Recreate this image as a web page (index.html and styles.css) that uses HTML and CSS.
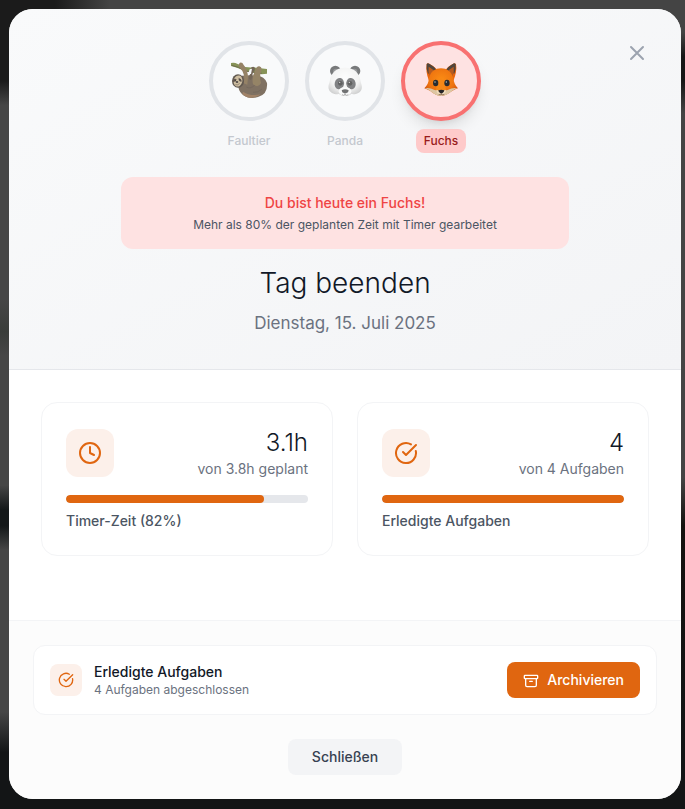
FILE: index.html
```html
<!DOCTYPE html>
<html lang="de">
<head>
<meta charset="utf-8">
<meta name="viewport" content="width=device-width, initial-scale=1">
<title>Tag beenden</title>
<link rel="stylesheet" href="styles.css">
</head>
<body>
<main class="modal" role="dialog" aria-labelledby="title">
  <header class="header">
    <button class="close" type="button" aria-label="Dialog beenden">
      <svg width="24" height="24" viewBox="0 0 24 24" fill="none" stroke="currentColor" stroke-width="2" stroke-linecap="round" stroke-linejoin="round"><path d="M6 18 18 6M6 6l12 12"/></svg>
    </button>
    <div class="animals">
      <div class="animal">
        <div class="ring">
          <svg class="sloth" width="40" height="40" viewBox="0 0 120 120">
            <path d="M6 6q10-3 20 3l22 9q14 2 26 1l40 5v14l-16 2q-28-6-48-9L24 20 6 15z" fill="#6b7a30"/>
            <path d="M8 13l20 6 26 12 44 6" fill="none" stroke="#4d4a24" stroke-width="3"/>
            <path d="M25 58q5-16 26-14l13-2 18 2q25 1 32 22 3 34-27 42-23 8-42-4-14-9-17-26z" fill="#614f3d"/>
            <path d="M42 92q22 15 53 8-11 10-29 11-17-2-26-12z" fill="#8b6543"/>
            <path d="M44 67Q51 39 31 18q-5-8 2-13 7-2 11 7 12 13 13 37l-2 22z" fill="#7d6542"/>
            <path d="M72 70q-5-21 7-42 4-13 12-12 9 2 6 13-7 18-1 37-8 17-24 4z" fill="#7d6742"/>
            <path d="M66 20q9-7 12 2 0 8-6 12l-5 22q-5 2-7-4l5-22z" fill="#52422e"/>
            <path d="M57 40l5-15 7-2-3 16z" fill="#f7f8fa"/>
            <ellipse cx="27" cy="60" rx="18" ry="20" fill="#3b3025"/>
            <ellipse cx="27" cy="60" rx="13" ry="17" fill="#c4b08b" transform="rotate(15 27 60)"/>
            <path d="M11 57q7-6 12-2-2 8-10 9zM29 50q8 3 10 11-6 3-10-4z" fill="#3e2f25"/>
            <circle cx="19" cy="59" r="2" fill="#191614"/><circle cx="33" cy="56" r="2" fill="#191614"/>
            <ellipse cx="24" cy="63" rx="4" ry="3" fill="#28211d"/>
            <path d="M19 71q8 3 13-4" fill="none" stroke="#5c4939" stroke-width="2"/>
            <path d="M52 78q11 7 25-5M72 94q15 2 27-10" fill="none" stroke="#4a3b2e" stroke-width="3" opacity=".5"/>
          </svg>
        </div>
        <span class="name">Faultier</span>
      </div>
      <div class="animal">
        <div class="ring">
          <svg width="40" height="40" viewBox="0 0 120 120">
            <defs><radialGradient id="panda" cx=".5" cy=".35" r=".65"><stop offset="0" stop-color="#fff"/><stop offset=".65" stop-color="#f0f0ef"/><stop offset="1" stop-color="#bdbdbd"/></radialGradient></defs>
            <circle cx="31" cy="30" r="16" fill="#343638"/><circle cx="90" cy="30" r="16" fill="#343638"/>
            <circle cx="33" cy="32" r="9" fill="#626466"/><circle cx="88" cy="32" r="9" fill="#626466"/>
            <path d="M60 20c28 0 43 16 46 38 2 12 6 15 4 25-3 14-20 18-31 16-8 8-29 8-37 0-12 2-28-3-31-16-2-10 2-14 4-25 3-22 18-38 45-38z" fill="url(#panda)"/>
            <ellipse cx="43" cy="68" rx="14" ry="17" fill="#404244" transform="rotate(12 43 68)"/>
            <ellipse cx="78" cy="68" rx="14" ry="17" fill="#404244" transform="rotate(-12 78 68)"/>
            <circle cx="46" cy="67" r="7" fill="#111"/><circle cx="75" cy="67" r="7" fill="#111"/>
            <circle cx="44" cy="64" r="2" fill="#ddd"/><circle cx="73" cy="64" r="2" fill="#ddd"/>
            <ellipse cx="60" cy="91" rx="19" ry="13" fill="#fafafa"/>
            <path d="M50 88q10-7 21 0 0 7-8 9h-5q-8-2-8-9z" fill="#292a2b"/>
            <path d="M60 97v5m-9-1q5 4 9 0 5 4 10 0" fill="none" stroke="#555" stroke-width="2"/>
          </svg>
        </div>
        <span class="name">Panda</span>
      </div>
      <div class="animal active">
        <div class="ring">
          <svg width="40" height="40" viewBox="0 0 120 120">
            <defs><radialGradient id="fox" cx=".5" cy=".4" r=".62"><stop offset="0" stop-color="#fb8c14"/><stop offset=".65" stop-color="#ee7410"/><stop offset="1" stop-color="#c94f10"/></radialGradient></defs>
            <path d="M17 9q3-5 9 0 20 11 26 24L24 60Q13 31 17 9zM104 9q-3-5-9 0-19 11-25 24l27 27q12-29 8-51z" fill="#e9650c"/>
            <path d="M17 9q3-5 9 0 14 8 20 17L21 38q-6-14-4-29zM104 9q-3-5-9 0-14 8-19 17l24 12q6-14 4-29z" fill="#51453c"/>
            <path d="M23 17q14 8 22 18L27 49q-7-16-4-32zM98 17q-14 8-21 18l17 14q7-16 4-32z" fill="#b65b20"/>
            <path d="M60 22c18 0 31 10 37 29 2 14 5 22 14 31-7 2-12 5-18 8-12 8-21 15-33 15S39 98 28 90c-6-3-12-6-18-8 9-9 13-18 14-31 5-19 18-29 36-29z" fill="url(#fox)"/>
            <path d="M12 82q13-3 29 5l12 2h15l12-2q15-8 29-5-7 1-16 8-17 15-33 15T29 91q-9-8-17-9z" fill="#dcc6a3"/>
            <path d="M60 51q12 12 14 31l-3 10q-11 8-22 0l-3-10q3-19 14-31z" fill="#f58818"/>
            <path d="M46 86q14 5 29 0-1 14-14 16-14-2-15-16z" fill="#efdcbc"/>
            <ellipse cx="44" cy="66" rx="8" ry="10" fill="#292c30"/><ellipse cx="78" cy="66" rx="8" ry="10" fill="#292c30"/>
            <ellipse cx="42" cy="63" rx="2" ry="3" fill="#92a1a5"/><ellipse cx="76" cy="63" rx="2" ry="3" fill="#92a1a5"/>
            <path d="M52 88q9-4 18 0 0 5-6 9h-6q-6-4-6-9z" fill="#242426"/>
            <path d="M61 96v5m-8-1q5 3 8 0 5 3 9 0" fill="none" stroke="#6d4a34" stroke-width="2"/>
          </svg>
        </div>
        <span class="name">Fuchs</span>
      </div>
    </div>
    <section class="result">
      <p class="result-title">Du bist heute ein Fuchs!</p>
      <p class="result-text">Mehr als 80% der geplanten Zeit mit Timer gearbeitet</p>
    </section>
    <h1 class="title" id="title">Tag beenden</h1>
    <p class="date">Dienstag, 15. Juli 2025</p>
  </header>

  <div class="stats">
    <section class="card">
      <div class="card-top">
        <span class="tile"><svg width="24" height="24" viewBox="0 0 24 24" class="line-icon"><circle cx="12" cy="12" r="10"/><path d="M12 6v6l4 2"/></svg></span>
        <div class="figures"><p class="value">3.1h</p><p class="planned">von 3.8h geplant</p></div>
      </div>
      <div class="track"><div class="fill" style="width:82%"></div></div>
      <p class="caption">Timer-Zeit (82%)</p>
    </section>
    <section class="card">
      <div class="card-top">
        <span class="tile"><svg width="24" height="24" viewBox="0 0 24 24" class="line-icon"><path d="M21.801 10A10 10 0 1 1 17 3.335"/><path d="m9 11 3 3L22 4"/></svg></span>
        <div class="figures"><p class="value">4</p><p class="planned">von 4 Aufgaben</p></div>
      </div>
      <div class="track"><div class="fill" style="width:100%"></div></div>
      <p class="caption">Erledigte Aufgaben</p>
    </section>
  </div>

  <footer class="footer">
    <section class="archive">
      <span class="tile tile-small"><svg width="16" height="16" viewBox="0 0 24 24" class="line-icon"><path d="M21.801 10A10 10 0 1 1 17 3.335"/><path d="m9 11 3 3L22 4"/></svg></span>
      <div class="archive-text"><h2 class="archive-title">Erledigte Aufgaben</h2><p class="archive-sub">4 Aufgaben abgeschlossen</p></div>
      <button class="button primary" type="button"><svg width="16" height="16" viewBox="0 0 24 24" class="line-icon"><rect x="2" y="5" width="20" height="5" rx="1"/><path d="M4 10v10a2 2 0 0 0 2 2h12a2 2 0 0 0 2-2V10M10 14h4"/></svg>Archivieren</button>
    </section>
    <button class="button secondary" type="button">Schließen</button>
  </footer>
</main>
</body>
</html>
```
FILE: styles.css
```css
* { box-sizing: border-box; }

body {
  margin: 0;
  min-height: 100vh;
  padding: 9px 4px 10px 9px;
  font-family: Inter, "Liberation Sans", sans-serif;
  font-size: 14px;
  line-height: 20px;
  color: #111827;
  background:
    linear-gradient(90deg, #1b1b1b 0 8%, #444 16% 100%) top / 100% 9px no-repeat,
    linear-gradient(#131516, #131516) bottom / 100% 10px no-repeat,
    linear-gradient(#1b1b1b 0 10%, #464646 13% 37%, #3a3d3a 41%, #464646 44% 60%, #141819 63% 65%, #464646 68% 88%, #131516 93%) left / 50% 100% no-repeat,
    linear-gradient(#444 0 4%, #161616 7% 10%, #444 14% 59%, #14120f 65%, #131516 93%) right / 50% 100% no-repeat;
}

h1, h2, p { margin: 0; }
svg { display: block; flex: none; }

button {
  border: 0;
  font: inherit;
  cursor: pointer;
}

.modal {
  max-width: 672px;
  margin: 0 auto;
  overflow: hidden;
  border-radius: 24px;
  background: #fff;
}

.header {
  position: relative;
  padding: 32px;
  border-bottom: 1px solid #e5e7eb;
  background: linear-gradient(to bottom right, #f9fafb, #f3f4f6);
  text-align: center;
}

.close {
  position: absolute;
  top: 24px;
  right: 24px;
  padding: 8px;
  background: none;
  color: #9ca3af;
}

.animals {
  display: flex;
  justify-content: center;
  gap: 16px;
  margin-bottom: 24px;
}

.animal {
  display: flex;
  flex-direction: column;
  align-items: center;
  gap: 8px;
}

.ring {
  display: flex;
  align-items: center;
  justify-content: center;
  width: 80px;
  height: 80px;
  border: 4px solid #e1e4e8;
  border-radius: 50%;
  background: #f9fafb;
}

.ring svg { opacity: 0.65; }
.ring .sloth { opacity: 0.8; }

.name {
  padding: 4px 8px;
  border-radius: 8px;
  font-size: 12px;
  font-weight: 500;
  line-height: 16px;
  color: #c4c8cf;
}

.active .ring {
  border-color: #f87171;
  background: #fee2e2;
  box-shadow: 0 10px 15px -3px rgb(0 0 0 / 0.1), 0 4px 6px -4px rgb(0 0 0 / 0.1);
}

.active .ring svg { opacity: 1; }

.active .name {
  background: #fecaca;
  color: #991b1b;
}

.result {
  max-width: 448px;
  margin: 0 auto 16px;
  padding: 16px;
  border-radius: 12px;
  background: #fee2e2;
}

.result-title {
  margin-bottom: 4px;
  font-weight: 500;
  color: #ef4444;
}

.result-text {
  font-size: 12px;
  line-height: 16px;
  color: #4b5563;
}

.title {
  margin-bottom: 8px;
  font-size: 28px;
  font-weight: 300;
  line-height: 36px;
}

.date {
  font-size: 17px;
  line-height: 28px;
  color: #6b7280;
}

.stats {
  display: grid;
  grid-template-columns: 1fr 1fr;
  gap: 24px;
  padding: 32px 32px 64px;
}

.card {
  padding: 24px;
  border: 1px solid #f3f4f6;
  border-radius: 16px;
}

.card-top {
  display: flex;
  align-items: center;
  justify-content: space-between;
  margin-bottom: 16px;
}

.tile {
  display: flex;
  flex: none;
  align-items: center;
  justify-content: center;
  width: 48px;
  height: 48px;
  border-radius: 12px;
  background: #fcf0ea;
  color: #e06610;
}

.tile-small {
  width: 32px;
  height: 32px;
  border-radius: 8px;
}

.line-icon {
  fill: none;
  stroke: currentColor;
  stroke-width: 2;
  stroke-linecap: round;
  stroke-linejoin: round;
}

.figures { text-align: right; }

.value {
  font-size: 24px;
  font-weight: 300;
  line-height: 32px;
}

.planned { color: #6b7280; }

.track {
  height: 8px;
  margin-bottom: 8px;
  overflow: hidden;
  border-radius: 4px;
  background: #e5e7eb;
}

.fill {
  height: 100%;
  border-radius: 4px;
  background: #e06610;
}

.caption {
  font-weight: 500;
  color: #4b5563;
}

.footer {
  display: flex;
  flex-direction: column;
  align-items: center;
  gap: 24px;
  padding: 24px;
  border-top: 1px solid #f3f4f6;
  background: #fcfcfc;
}

.archive {
  display: flex;
  align-items: center;
  gap: 12px;
  width: 100%;
  padding: 16px;
  border: 1px solid #f3f4f6;
  border-radius: 12px;
  background: #fff;
}

.archive-text { flex: 1; }

.archive-title {
  font-size: 14px;
  font-weight: 500;
}

.archive-sub {
  font-size: 12px;
  line-height: 16px;
  color: #6b7280;
}

.button {
  display: flex;
  align-items: center;
  gap: 8px;
  padding: 8px 16px;
  border-radius: 8px;
  font-weight: 500;
}

.primary {
  background: #e06610;
  color: #fff;
}

.secondary {
  padding: 8px 24px;
  background: #f3f4f6;
  color: #374151;
}
```
